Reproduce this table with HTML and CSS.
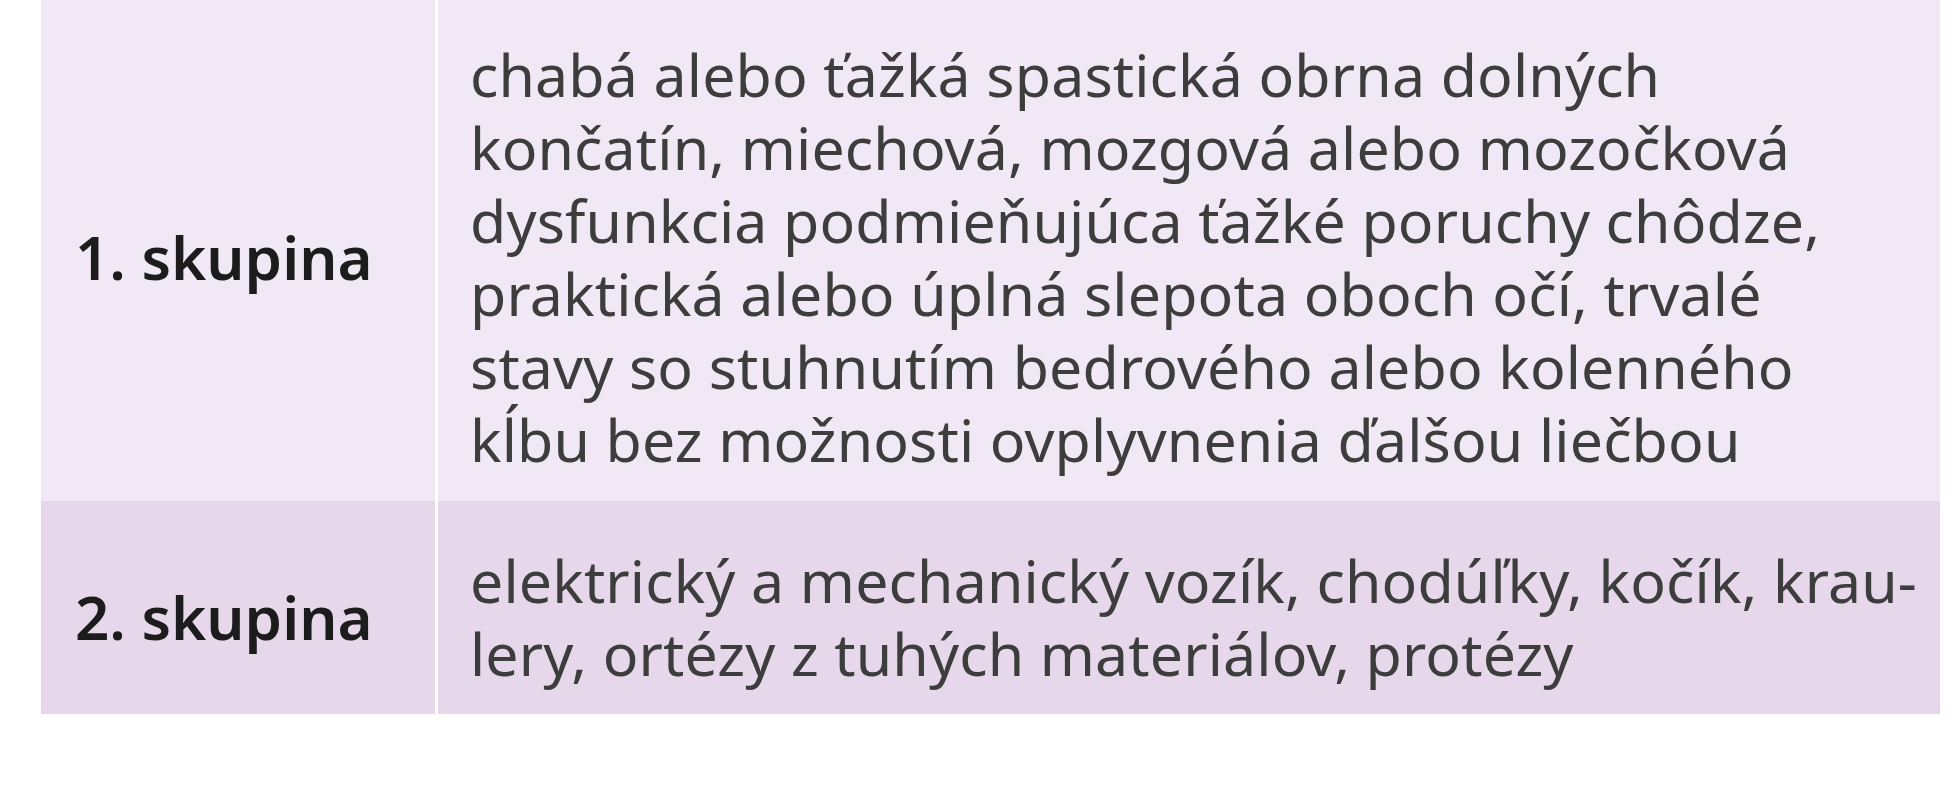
FILE: index.html
```html
<!DOCTYPE html>
<html lang="sk">
<head>
<meta charset="utf-8">
<title>Skupiny</title>
<link rel="stylesheet" href="styles.css">
</head>
<body>
<div class="table">
  <div class="row row-first">
    <div class="cell label">1. skupina</div>
    <div class="cell text">chabá alebo ťažká spastická obrna dolných<br>končatín, miechová, mozgová alebo mozočková<br>dysfunkcia podmieňujúca ťažké poruchy chôdze,<br>praktická alebo úplná slepota oboch očí, trvalé<br>stavy so stuhnutím bedrového alebo kolenného<br>kĺbu bez možnosti ovplyvnenia ďalšou liečbou</div>
  </div>
  <div class="row row-second">
    <div class="cell label">2. skupina</div>
    <div class="cell text">elektrický a mechanický vozík, chodúľky, kočík, krau-<br>lery, ortézy z tuhých materiálov, protézy</div>
  </div>
</div>
</body>
</html>
```

FILE: styles.css
```css
html, body {
  margin: 0;
  padding: 0;
  background: #ffffff;
}

body {
  font-family: "Noto Sans", "Open Sans", "DejaVu Sans", sans-serif;
}

.table {
  margin-left: 41px;
  width: 1899px;
  display: flex;
  flex-direction: column;
}

.row {
  display: grid;
  grid-template-columns: 394px 1502px;
  column-gap: 3px;
}

.row-first .cell {
  background: #f0e8f4;
  padding: 38px 30px 25px 34px;
}

.row-second .cell {
  background: #e6d7ea;
  padding: 43px 30px 24px 34px;
}

.cell {
  font-size: 59px;
  line-height: 73px;
  box-sizing: border-box;
}

.label {
  display: flex;
  align-items: center;
  font-size: 60px;
  font-weight: 600;
  color: #1c1c1c;
  white-space: nowrap;
}

.text {
  color: #3d3d3d;
  letter-spacing: 0.15px;
  white-space: nowrap;
}

.row-first .text,
.row-second .text {
  padding-left: 32px;
}
```
